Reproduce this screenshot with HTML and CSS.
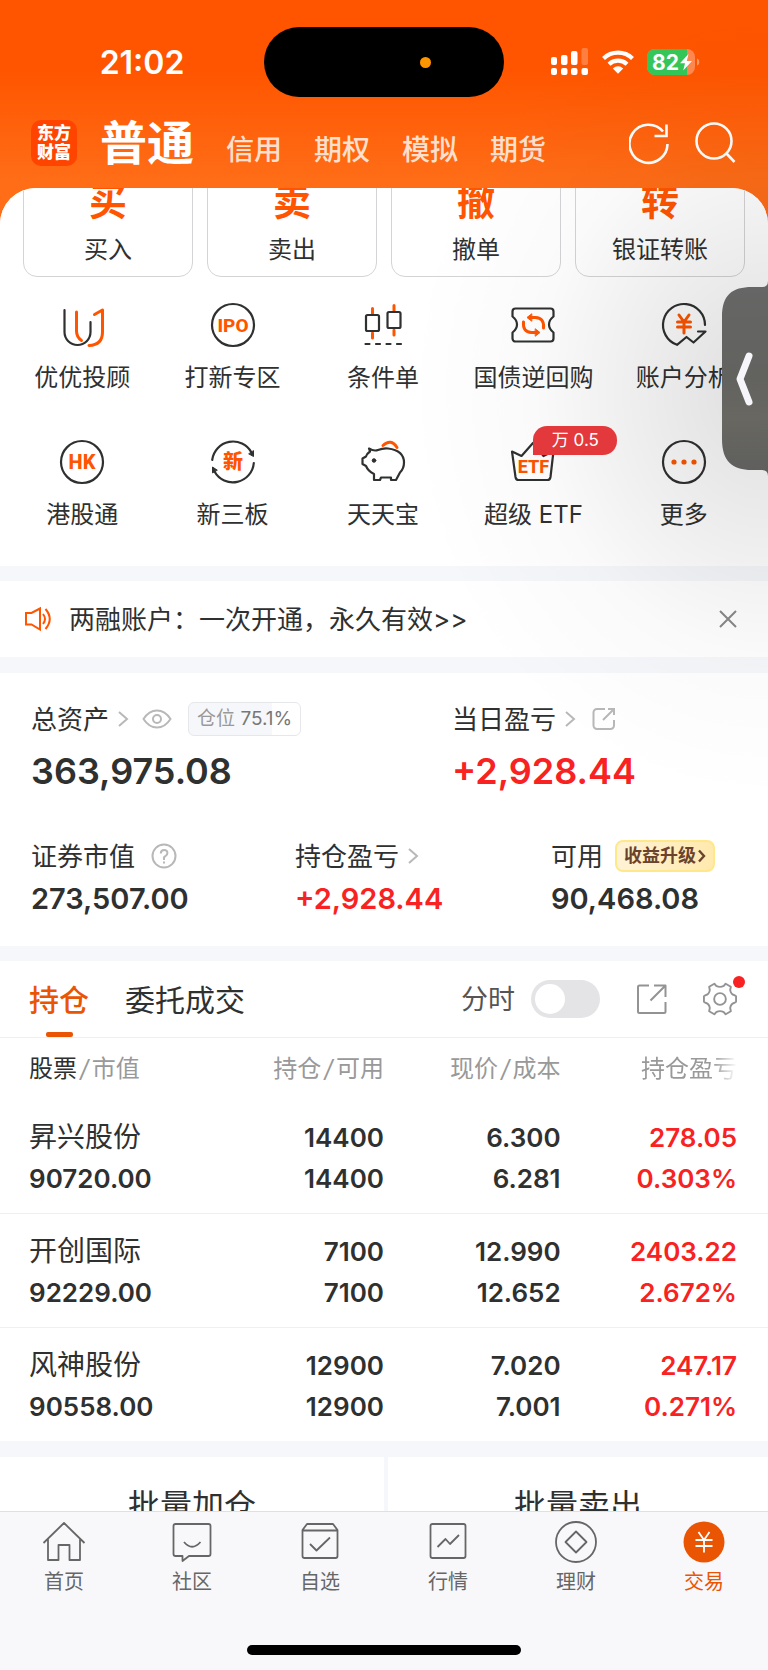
FILE: index.html
```html
<!DOCTYPE html>
<html lang="zh-CN">
<head>
<meta charset="utf-8">
<meta name="viewport" content="width=device-width, initial-scale=1">
<title>交易 - 普通</title>
<link rel="stylesheet" href="styles.css">
</head>
<body>
<div class="screen">
  <header class="header">
    <div class="status">
      <time class="clock">21:02</time>
      <div class="island"><i class="island-dot"></i></div>
      <div class="status-icons">
        <svg width="38" height="28" viewBox="0 0 38 28" fill="#fff"><rect x="0" y="9" width="6" height="8" rx="2"/><rect x="10" y="7" width="6.500" height="10" rx="2"/><rect x="20" y="3" width="6.500" height="14" rx="2"/><rect x="30.500" y="0" width="6.500" height="17" rx="2" opacity=".25"/><rect x="0" y="20" width="6" height="7" rx="2"/><rect x="10" y="20" width="6.500" height="7" rx="2"/><rect x="20" y="20" width="6.500" height="7" rx="2"/><rect x="30.500" y="20" width="6.500" height="7" rx="2"/></svg>
        <svg width="32" height="26" viewBox="0 0 32 26" fill="none" stroke="#fff" stroke-width="4.200"><path d="M1.500 9.500a21 21 0 0 1 29 0M7 15.300a13 13 0 0 1 18 0"/><path d="M10.800 19.400a7.500 7.500 0 0 1 10.400 0L16 24.700Z" fill="#fff" stroke="none"/></svg>
        <svg class="battery" width="53" height="28" viewBox="0 0 53 28"><defs><clipPath id="cell"><rect x="0" y="1" width="48" height="26" rx="8"/></clipPath></defs><g clip-path="url(#cell)"><rect width="48" height="28" fill="#ff8850"/><rect width="40" height="28" fill="#34c759"/></g><path d="M50 10.500c3 .8 3 6.200 0 7Z" fill="#ff9a68"/><text x="5" y="21.500" fill="#fff" font-size="21" font-weight="700">82</text><path d="M41.500 6 33 15.200h5L36.200 22.500 45 13h-5.200Z" fill="#fff"/></svg>
      </div>
    </div>
    <nav class="nav">
      <div class="logo"><span>东方</span><span>财富</span></div>
      <div class="account-tabs">
        <a class="account current" href="#">普通</a>
        <a class="account" href="#">信用</a>
        <a class="account" href="#">期权</a>
        <a class="account" href="#">模拟</a>
        <a class="account" href="#">期货</a>
      </div>
      <button class="icon-btn" aria-label="刷新"><svg width="44" height="44" viewBox="0 0 44 44" fill="none" stroke="#fff" stroke-width="2.600"><path d="M38.500 23A19 19 0 1 1 34 10.500M37.500 3.500V15H25.500"/></svg></button>
      <button class="icon-btn" aria-label="搜索"><svg width="44" height="44" viewBox="0 0 44 44" fill="none" stroke="#fff" stroke-width="2.600"><circle cx="21" cy="20" r="17.500"/><path d="m33 32 8.500 9"/></svg></button>
    </nav>
  </header>

  <main class="content">
    <section class="quick">
      <div class="actions">
        <button class="action"><b>买</b><span>买入</span></button>
        <button class="action"><b>卖</b><span>卖出</span></button>
        <button class="action"><b>撤</b><span>撤单</span></button>
        <button class="action"><b>转</b><span>银证转账</span></button>
      </div>
      <div class="services">
        <a class="service" href="#"><svg viewBox="0 0 48 48" class="glyph"><path d="M6.500 9v22a13 13 0 0 0 26 0V21"/><path class="hot" d="M18.500 11v19q0 6 5 9.500M36.500 13.500 44.500 9V31q0 13-13.500 13.500"/></svg><span>优优投顾</span></a>
        <a class="service" href="#"><svg viewBox="0 0 48 48" class="glyph"><circle cx="24" cy="24" r="21"/><text x="24" y="31" font-size="19">IPO</text></svg><span>打新专区</span></a>
        <a class="service" href="#"><svg viewBox="0 0 48 48" class="glyph"><path class="hot" d="M13.500 7.500v5M13.500 32v5M35 4.500v5M35 29v5"/><rect x="7" y="14" width="13" height="16" rx="1.500"/><rect x="28.500" y="11" width="13" height="16" rx="1.500"/><path d="M6.500 43h4M17 43h4M27.500 43h4M38 43h4"/></svg><span>条件单</span></a>
        <a class="service" href="#"><svg viewBox="0 0 48 48" class="glyph"><path d="M6.500 7.500h35a3 3 0 0 1 3 3v5q-4.500 3.500-4.500 8t4.500 8v6a3 3 0 0 1-3 3h-35a3 3 0 0 1-3-3v-6q4.500-3.500 4.500-8t-4.500-8v-5a3 3 0 0 1 3-3Z"/><path class="hot" d="M14.500 21q-1 10 8 10.500h4M34.500 27q1-10-8-10.500h-4"/><path class="hot fill" d="m26.500 28 4.500 3.500-4.500 3.500ZM22.500 13 18 16.500l4.500 3.500Z"/></svg><span>国债逆回购</span></a>
        <a class="service" href="#"><svg viewBox="0 0 48 48" class="glyph"><path d="M45 24A21 21 0 1 0 17 43.800L26.500 36l7 5.500L45.500 30.500H38"/><path class="hot" d="m19 14 5 7 5-7M24 21v11M17.500 21h13M17.500 26h13"/></svg><span>账户分析</span></a>
        <a class="service" href="#"><svg viewBox="0 0 48 48" class="glyph"><circle cx="24" cy="24" r="21"/><text x="24" y="31" font-size="20">HK</text></svg><span>港股通</span></a>
        <a class="service" href="#"><svg viewBox="0 0 48 48" class="glyph"><path d="M3.200 22A21 21 0 0 1 42.500 14.500M44.800 25A21 21 0 0 1 5.500 33.500"/><path class="tip" d="M44.500 13v5.500L40 16ZM3.500 34.500V29l4.500 3Z"/><text x="24" y="31" font-size="20">新</text></svg><span>新三板</span></a>
        <a class="service" href="#"><svg viewBox="0 0 48 48" class="glyph"><path d="M10 10.500q5 3 9 1.500 5-2 10-1.500 16 2 16 14 0 6-4 10l-4 7.500h-5v-2.500h-10l-1 2.500h-6v-6q-6-3-8-8L3.500 26v-5.500L7 18.500q1-3 4-5Z"/><circle class="ink" cx="15" cy="22.500" r="1.800"/><path class="hot" d="M24 7.500q8-7.500 14 2"/></svg><span>天天宝</span></a>
        <a class="service" href="#"><svg viewBox="0 0 48 48" class="glyph"><path d="m3 13.500 9.500 4.500L24 5l10.500 13 10-5-3 26q-.500 3-3 3h-29q-2.500 0-3-3Z"/><text x="24.500" y="34.500" font-size="18">ETF</text></svg><span>超级 ETF</span><em class="rate">万 0.5</em></a>
        <a class="service" href="#"><svg viewBox="0 0 48 48" class="glyph"><circle cx="24" cy="24" r="21"/><circle class="dot" cx="14" cy="24" r="2.600"/><circle class="dot" cx="24" cy="24" r="2.600"/><circle class="dot" cx="34" cy="24" r="2.600"/></svg><span>更多</span></a>
      </div>
    </section>

    <section class="notice">
      <svg width="28" height="26" viewBox="0 0 28 26" fill="none" stroke="#ff5500" stroke-width="2"><path d="M2 7h5.500L16 2.500v21L7.500 18.500H2ZM19 8q4 5 0 10M21.500 3q8.500 10 0 20"/></svg>
      <a href="#">两融账户：一次开通，永久有效&gt;&gt;</a>
      <button aria-label="关闭"><svg width="18" height="18" viewBox="0 0 18 18" stroke="#888" stroke-width="2"><path d="m1 1 16 16M17 1 1 17"/></svg></button>
    </section>

    <section class="assets">
      <div class="totals">
        <div>
          <div class="label"><span class="caption">总资产</span>
            <svg width="11" height="18" viewBox="0 0 11 18" class="line"><path d="m1 2 8 7-8 7"/></svg>
            <svg width="30" height="20" viewBox="0 0 30 20" class="line eye"><path d="M1.500 10Q7 1.500 15 1.500T28.500 10Q23 18.500 15 18.500T1.500 10Z"/><circle cx="15" cy="10" r="4"/></svg>
            <span class="ratio">仓位 <b>75.1%</b></span>
          </div>
          <div class="big">363,975.08</div>
        </div>
        <div>
          <div class="label"><span class="caption">当日盈亏</span>
            <svg width="11" height="18" viewBox="0 0 11 18" class="line"><path d="m1 2 8 7-8 7"/></svg>
            <svg width="24" height="24" viewBox="0 0 24 24" class="line share"><path d="M13 2H5a3.500 3.500 0 0 0-3.500 3.500v13A3.500 3.500 0 0 0 5 22h13.500a3.500 3.500 0 0 0 3.500-3.500V13M16 2h6v6M22 2 11 13"/></svg>
          </div>
          <div class="big up">+2,928.44</div>
        </div>
      </div>
      <div class="details">
        <div>
          <div class="label"><span class="caption">证券市值</span>
            <svg width="26" height="26" viewBox="0 0 26 26" class="line help"><circle cx="13" cy="13" r="11.500"/><path d="M9.800 10.500q0-3.500 3.300-3.500t3.300 3q0 2-2 3.200T13 16v1M13 18.500v2"/></svg>
          </div>
          <div class="mid">273,507.00</div>
        </div>
        <div>
          <div class="label"><span class="caption">持仓盈亏</span>
            <svg width="11" height="18" viewBox="0 0 11 18" class="line"><path d="m1 2 8 7-8 7"/></svg>
          </div>
          <div class="mid up">+2,928.44</div>
        </div>
        <div>
          <div class="label"><span class="caption">可用</span><button class="boost">收益升级<svg width="8" height="14" viewBox="0 0 8 14" fill="none" stroke="#6b432c" stroke-width="2.400"><path d="m1 1.500 5 5.500-5 5.500"/></svg></button></div>
          <div class="mid">90,468.08</div>
        </div>
      </div>
    </section>

    <section class="holdings">
      <div class="bar">
        <button class="tab on">持仓</button>
        <button class="tab">委托成交</button>
        <label class="minute" for="minute">分时</label>
        <input class="switch" id="minute" type="checkbox" role="switch">
        <button class="tool" aria-label="分享"><svg width="30" height="30" viewBox="0 0 30 30"><path d="M12 1.500H2.500Q1 1.500 1 3v24.500Q1 29 2.500 29H27q1.500 0 1.500-1.500V18M17 1.500h11.500V13M28 2 13.500 16.500"/></svg></button>
        <button class="tool gear" aria-label="设置"><svg width="34" height="34" viewBox="0 0 36 36"><path d="M14 4.200 Q18 6.200 22 4.200 L24 1.800 L29.500 5 L28.800 8.500 Q29.500 13 33.500 14 L35 15 V21 L33.500 22 Q29.500 23 28.800 27.500 L29.500 31 L24 34.200 L22 31.800 Q18 29.800 14 31.800 L12 34.200 L6.500 31 L7.200 27.500 Q6.500 23 2.500 22 L1 21 V15 L2.500 14 Q6.500 13 7.200 8.500 L6.500 5 L12 1.800Z"/><circle cx="18" cy="18" r="6.200"/></svg></button>
      </div>
      <table class="stocks">
        <thead><tr><th><b>股票</b><i>/</i>市值</th><th>持仓<i>/</i>可用</th><th>现价<i>/</i>成本</th><th><span class="fade">持仓盈亏</span></th></tr></thead>
        <tbody>
          <tr><td><span class="name">昇兴股份</span><span>90720.00</span></td><td><span>14400</span><span>14400</span></td><td><span>6.300</span><span>6.281</span></td><td class="up"><span>278.05</span><span>0.303%</span></td></tr>
          <tr><td><span class="name">开创国际</span><span>92229.00</span></td><td><span>7100</span><span>7100</span></td><td><span>12.990</span><span>12.652</span></td><td class="up"><span>2403.22</span><span>2.672%</span></td></tr>
          <tr><td><span class="name">风神股份</span><span>90558.00</span></td><td><span>12900</span><span>12900</span></td><td><span>7.020</span><span>7.001</span></td><td class="up"><span>247.17</span><span>0.271%</span></td></tr>
        </tbody>
      </table>
    </section>

    <section class="batch">
      <button>批量加仓</button>
      <button>批量卖出</button>
    </section>
  </main>

  <footer class="footer">
    <nav class="tabbar">
      <a href="#"><svg viewBox="0 0 44 44"><path d="M1.500 23 22 3l20.500 20M6 19v21h10.500V25h11v15H38V19"/></svg>首页</a>
      <a href="#"><svg viewBox="0 0 44 44"><path d="M5.500 4h33q2 0 2 2v28q0 2-2 2H19l-6.500 5V36h-7q-2 0-2-2V6q0-2 2-2ZM14 22q8 9.500 16.500 0"/></svg>社区</a>
      <a href="#"><svg viewBox="0 0 44 44"><path d="M9 4h26l4.500 6v26q0 2-2 2h-31q-2 0-2-2V10ZM4.500 10.500h35M12 24l6.500 6.500L32 17.500"/></svg>自选</a>
      <a href="#"><svg viewBox="0 0 44 44"><path d="M6.500 4h31q2 0 2 2v30q0 2-2 2h-31q-2 0-2-2V6q0-2 2-2ZM11.500 27l8-8 4.500 5 9-9"/></svg>行情</a>
      <a href="#"><svg viewBox="0 0 44 44"><circle cx="22" cy="22" r="20"/><path d="M22 11.500 32.500 22 22 32.500 11.500 22Z"/></svg>理财</a>
      <a class="on" href="#"><svg viewBox="0 0 44 44"><circle cx="22" cy="22" r="20.500" fill="#ea5504" stroke="none"/><path stroke="#fff" d="m16.500 12 5.500 8 5.500-8M22 20v12.500M13.500 20h17M13.500 26h17"/></svg>交易</a>
    </nav>
    <div class="home-bar"></div>
  </footer>

  <button class="drawer" aria-label="展开侧栏"><svg width="46" height="195" viewBox="0 0 46 195"><defs><linearGradient id="slate" x2="0" y2="1"><stop stop-color="#666"/><stop offset=".5" stop-color="#62625f"/><stop offset=".7" stop-color="#686761"/><stop offset="1" stop-color="#5e5e5d"/></linearGradient></defs><path fill="url(#slate)" d="M46 0Q46 6 40 6H30C10 6 0 14 0 36V158C0 180 10 189 30 189H40Q46 189 46 195Z"/><path d="m27 75-9 23 9 23" fill="none" stroke="#f5f5fa" stroke-width="7" stroke-linecap="round" stroke-linejoin="round"/></svg></button>
</div>
</body>
</html>
```
FILE: styles.css
```css
* { box-sizing: border-box; }

body {
  margin: 0;
  font-family: Inter, "Noto Sans CJK SC", sans-serif;
  color: #2f3030;
}

button {
  margin: 0;
  padding: 0;
  border: 0;
  background: none;
  font: inherit;
  color: inherit;
}

a { color: inherit; text-decoration: none; }
svg { display: block; flex: none; }

.screen {
  position: relative;
  display: flex;
  flex-direction: column;
  height: 100vh;
  overflow: hidden;
  background: linear-gradient(#ff5500 70px, #ff6d17 180px, #ff6d17 240px);
}

/* Header */
.header { flex: none; padding-top: 27px; }

.status {
  display: grid;
  grid-template-columns: 1fr 240px 1fr;
  align-items: center;
}
.clock {
  padding-left: 20px;
  text-align: center;
  font-size: 32px;
  font-weight: 600;
  color: #fff;
}
.island {
  display: flex;
  align-items: center;
  justify-content: flex-end;
  height: 70px;
  padding-right: 73px;
  border-radius: 35px;
  background: #000;
}
.island-dot { width: 11px; height: 11px; border-radius: 50%; background: #ff9500; }
.status-icons {
  display: flex;
  align-items: center;
  justify-content: center;
  gap: 13px;
  padding-right: 21px;
}

.nav {
  display: flex;
  align-items: center;
  gap: 20px;
  height: 91px;
  padding: 0 31px;
}
.logo {
  display: flex;
  flex-direction: column;
  align-items: center;
  justify-content: center;
  width: 46px;
  height: 46px;
  border-radius: 10px;
  background: #ff4400;
  color: #fff;
  font-size: 17px;
  font-weight: 900;
  line-height: 19px;
}
.account-tabs {
  flex: 1;
  display: flex;
  align-items: baseline;
  gap: 32px;
  padding: 8px 0 0 3px;
  line-height: 60px;
}
.account { font-size: 28px; font-weight: 500; color: #ffe0cf; }
.account.current { font-size: 47px; font-weight: 700; color: #fff; }

/* Content */
.content {
  flex: 1;
  min-height: 0;
  overflow: hidden;
  border-radius: 36px 36px 0 0;
  background: #f6f7fa;
}
.content > section { background: #fff; }

.quick { padding-bottom: 37px; }
.actions {
  display: grid;
  grid-template-columns: repeat(4, 1fr);
  gap: 14px;
  margin-top: -22px;
  padding: 0 23px;
}
.action {
  display: flex;
  flex-direction: column;
  align-items: center;
  gap: 13px;
  padding: 12px 0;
  border: 1px solid #d4d4d6;
  border-radius: 14px;
  font-size: 24px;
  line-height: 28px;
}
.action b { font-size: 38px; line-height: 44px; color: #ff5500; }

.services {
  display: grid;
  grid-template-columns: repeat(5, 1fr);
  row-gap: 46px;
  padding: 24px 9px 0 7px;
}
.service {
  position: relative;
  display: flex;
  flex-direction: column;
  align-items: center;
  gap: 15px;
  font-size: 24px;
  line-height: 28px;
  white-space: nowrap;
}
.glyph {
  width: 48px;
  height: 48px;
  fill: none;
  stroke: #2f3030;
  stroke-width: 2.2;
  stroke-linecap: round;
  stroke-linejoin: round;
}
.glyph text {
  fill: #ff5500;
  stroke: none;
  font-family: Roboto, "Noto Sans CJK SC", sans-serif;
  font-weight: 800;
  text-anchor: middle;
}
.glyph .hot { stroke: #ff5500; stroke-width: 3; }
.glyph .fill { fill: #ff5500; stroke-width: 1; }
.glyph .tip, .glyph .ink { fill: #2f3030; stroke-width: 1; }
.glyph .dot { fill: #ff5500; stroke: none; }
.rate {
  position: absolute;
  top: -12px;
  left: 50%;
  z-index: 1;
  width: 84px;
  border-radius: 14px 14px 14px 0;
  background: #e4393c;
  color: #fff;
  font-size: 17px;
  font-style: normal;
  line-height: 29px;
  text-align: center;
}

.notice {
  display: flex;
  align-items: center;
  gap: 17px;
  height: 76px;
  margin: 15px 0 16px;
  padding: 0 31px 0 24px;
  font-size: 26px;
}
.notice a { flex: 1; padding-bottom: 4px; }

/* Assets */
.assets { padding: 28px 31px 29px; }
.totals { display: grid; grid-template-columns: 421fr 285fr; }
.details { display: grid; grid-template-columns: 264fr 256fr 186fr; margin-top: 45px; }
.label {
  display: flex;
  align-items: center;
  gap: 9px;
  height: 36px;
  font-size: 26px;
  white-space: nowrap;
}
.caption { padding-bottom: 4px; }
.line { fill: none; stroke: #b8b8b8; stroke-width: 2; }
.eye { margin-left: 4px; }
.share, .help { margin-left: 7px; }
.ratio {
  margin-left: 7px;
  padding: 0 8px;
  border: 1px solid #e6e7ea;
  border-radius: 6px;
  background: linear-gradient(90deg, #f6f7fa 75%, #fff 75%);
  color: #999;
  font-size: 19px;
  line-height: 32px;
}
.ratio b { font-weight: 400; color: #777; }
.big { margin-top: 12px; font-size: 36px; font-weight: 600; line-height: 44px; }
.mid { margin-top: 7px; font-size: 29px; font-weight: 600; line-height: 36px; }
.up { color: #f82222; }
.boost {
  display: flex;
  align-items: center;
  gap: 2px;
  margin-left: 3px;
  padding: 0 7px;
  border: 2px solid #ffe88a;
  border-radius: 8px;
  background: linear-gradient(90deg, #fff3d6, #ffe9ae);
  color: #6b432c;
  font-size: 18px;
  font-weight: 700;
  line-height: 28px;
}

/* Holdings */
.holdings { margin-top: 15px; }
.bar {
  display: flex;
  align-items: center;
  height: 77px;
  padding: 0 31px 0 29px;
  border-bottom: 1px solid #f0f0f2;
}
.tab {
  position: relative;
  height: 76px;
  margin-right: 36px;
  padding-bottom: 3px;
  font-size: 30px;
}
.tab.on { font-weight: 500; color: #ea5504; }
.tab.on::after {
  content: "";
  position: absolute;
  bottom: 0;
  left: 50%;
  width: 27px;
  height: 5px;
  margin-left: -13px;
  border-radius: 2px;
  background: #ea5504;
}
.minute { margin-left: auto; padding-bottom: 3px; font-size: 27px; color: #555; }
.switch {
  appearance: none;
  width: 69px;
  height: 38px;
  margin: 0 37px 0 16px;
  padding: 4px;
  border-radius: 19px;
  background: #e4e4e6;
}
.switch::before {
  content: "";
  display: block;
  width: 30px;
  height: 30px;
  border-radius: 50%;
  background: #fff;
}
.switch:checked { background: #ea5504; }
.switch:checked::before { margin-left: auto; }
.tool { position: relative; }
.tool svg { fill: none; stroke: #939393; stroke-width: 2; stroke-linejoin: round; }
.gear { margin-left: 36px; }
.gear::after {
  content: "";
  position: absolute;
  top: -6px;
  right: -8px;
  width: 12px;
  height: 12px;
  border-radius: 50%;
  background: #f82222;
}

.stocks {
  width: 100%;
  border-collapse: collapse;
  table-layout: fixed;
}
.stocks th, .stocks td { padding: 0; text-align: right; white-space: nowrap; }
.stocks th {
  height: 61px;
  padding-bottom: 4px;
  color: #999;
  font-size: 24px;
  font-weight: 400;
}
.stocks th b { font-weight: 400; color: #2f3030; }
.stocks th i { padding: 0 3px; }
.stocks th:nth-child(1) { width: 30%; }
.stocks th:nth-child(2) { width: 20%; }
.stocks th:nth-child(3) { width: 23%; }
.stocks tr > :first-child { padding-left: 29px; text-align: left; }
.stocks tr > :last-child { padding-right: 31px; }
.fade {
  -webkit-mask-image: linear-gradient(90deg, #000 75%, transparent);
  mask-image: linear-gradient(90deg, #000 75%, transparent);
}
.stocks td {
  height: 114px;
  padding-top: 4px;
  font-size: 26px;
  font-weight: 600;
  line-height: 41px;
}
.stocks tbody tr + tr { border-top: 1px solid #f0f0f2; }
.stocks td span { display: block; }
.stocks .name { font-size: 28px; font-weight: 400; }

.batch {
  display: grid;
  grid-template-columns: 1fr 1fr;
  margin-top: 16px;
}
.batch button { height: 92px; font-size: 32px; }
.batch button + button { border-left: 4px solid #f6f7fa; }

/* Footer */
.footer {
  flex: none;
  height: 159px;
  border-top: 1px solid #e0e0e3;
  background: #f8f8fb;
}
.tabbar { display: grid; grid-template-columns: repeat(6, 1fr); height: 133px; padding-top: 8px; }
.tabbar a {
  display: flex;
  flex-direction: column;
  align-items: center;
  gap: 4px;
  color: #666;
  font-size: 20px;
  line-height: 28px;
}
.tabbar svg {
  width: 44px;
  height: 44px;
  fill: none;
  stroke: #666;
  stroke-width: 1.8;
  stroke-linejoin: round;
}
.tabbar .on { color: #ea5504; }
.home-bar { width: 274px; height: 10px; margin: 0 auto; border-radius: 5px; background: #000; }

/* Edge drawer handle, floating over the page */
.drawer { position: absolute; top: 281px; right: 0; }
.drawer::before {
  content: "";
  position: absolute;
  top: -300px;
  right: 0;
  width: 360px;
  height: 820px;
  background: radial-gradient(ellipse 360px 410px at 100% 50%, rgba(0, 0, 0, 0.13), rgba(0, 0, 0, 0.07) 35%, rgba(0, 0, 0, 0.02) 65%, transparent);
  pointer-events: none;
}
.drawer svg { position: relative; }
```
